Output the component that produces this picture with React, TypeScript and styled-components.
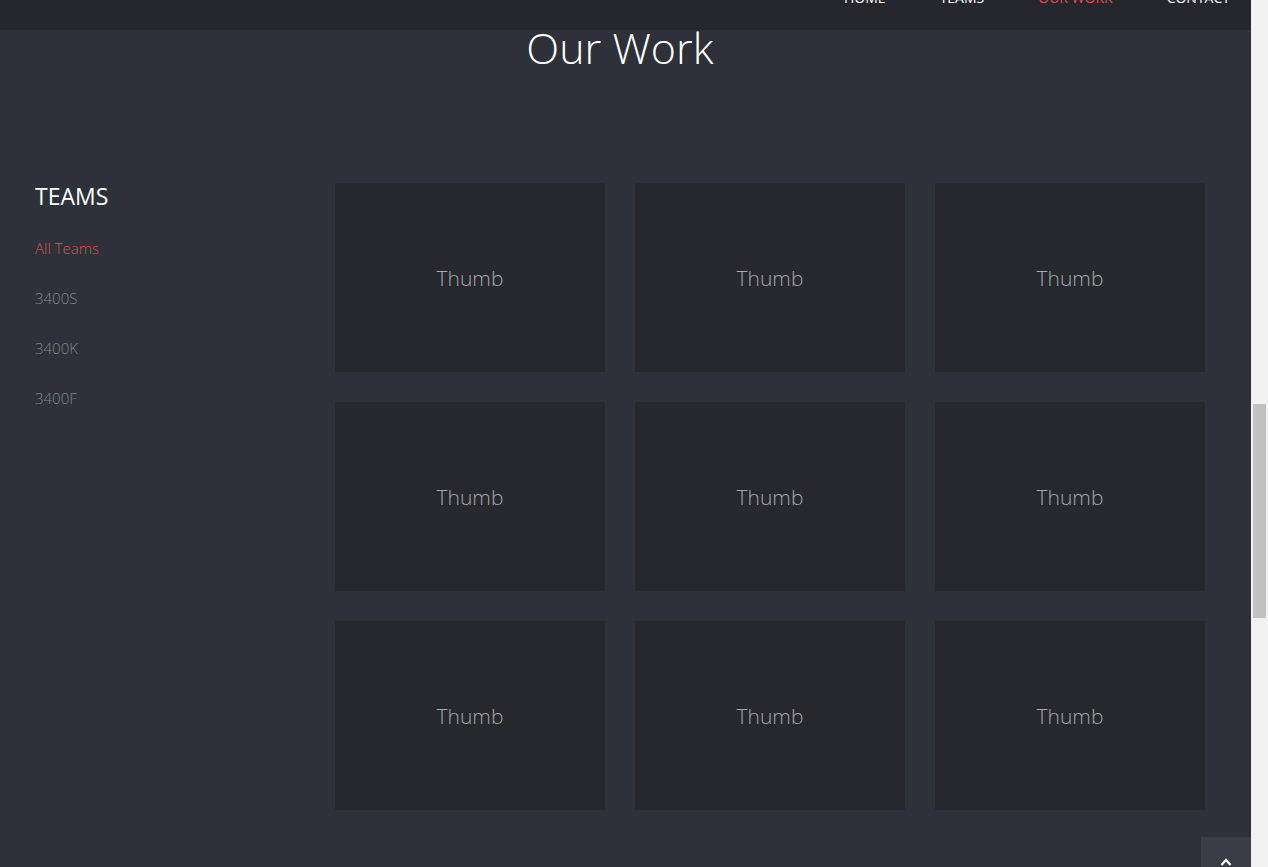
import React from 'react';
import styled, { createGlobalStyle } from 'styled-components';

const GlobalStyle = createGlobalStyle`
  html, body {
    margin: 0;
    padding: 0;
    height: 100%;
    overflow: hidden;
    background: #2e3139;
  }
  * {
    box-sizing: border-box;
  }
`;

const Shell = styled.div`
  display: flex;
  height: 867px;
  font-family: 'Open Sans', 'Noto Sans', sans-serif;
`;

const Page = styled.div`
  position: relative;
  flex: 1;
  display: flex;
  flex-direction: column;
  background: #2e3139;
  overflow: hidden;
`;

const NavBar = styled.nav`
  height: 30px;
  flex-shrink: 0;
  background: #25272c;
  display: flex;
  justify-content: flex-end;
  align-items: flex-start;
  padding-right: 21px;
  overflow: hidden;
`;

const NavLinks = styled.ul`
  display: flex;
  gap: 54px;
  list-style: none;
  margin: -12px 0 0;
  padding: 0;
`;

const NavLink = styled.li<{ active?: boolean }>`
  font-size: 14px;
  line-height: 20px;
  font-weight: 400;
  text-transform: uppercase;
  color: ${(p) => (p.active ? '#d9534f' : '#ffffff')};
`;

const Title = styled.h1`
  margin: -12px 0 0;
  padding-left: 35px;
  width: 1205px;
  text-align: center;
  font-size: 43px;
  line-height: 60px;
  font-weight: 300;
  color: #ffffff;
`;

const Body = styled.div`
  display: flex;
  padding: 105px 0 0 35px;
`;

const Sidebar = styled.aside`
  width: 300px;
  flex-shrink: 0;
`;

const SideTitle = styled.h3`
  margin: 0;
  font-size: 23px;
  line-height: 26px;
  font-weight: 400;
  color: #ffffff;
  text-transform: uppercase;
`;

const FilterList = styled.ul`
  list-style: none;
  margin: 29px 0 0;
  padding: 0;
  display: flex;
  flex-direction: column;
  gap: 30px;
`;

const Filter = styled.li<{ active?: boolean }>`
  font-size: 15px;
  line-height: 20px;
  font-weight: 300;
  color: ${(p) => (p.active ? '#d9534f' : '#84878c')};
`;

const Grid = styled.div`
  display: grid;
  grid-template-columns: repeat(3, 270px);
  grid-auto-rows: 189px;
  gap: 30px;
`;

const Thumb = styled.div`
  background: #26282d;
  display: flex;
  align-items: center;
  justify-content: center;
  font-size: 21px;
  font-weight: 300;
  color: #a6a7aa;
`;

const BackToTop = styled.button`
  position: absolute;
  right: 0;
  bottom: 0;
  width: 50px;
  height: 30px;
  border: none;
  padding: 21px 0 0;
  background: #3b3e46;
  display: flex;
  justify-content: center;
  align-items: flex-start;
  cursor: pointer;
`;

const ScrollTrack = styled.div`
  width: 17px;
  flex-shrink: 0;
  background: #f1f1f1;
  padding: 404px 2px 0;
`;

const ScrollThumb = styled.div`
  height: 214px;
  background: #c1c1c1;
`;

const filters = ['All Teams', '3400S', '3400K', '3400F'];

const App: React.FC = () => {
  return (
    <>
      <GlobalStyle />
      <Shell>
        <Page>
          <NavBar>
            <NavLinks>
              <NavLink>Home</NavLink>
              <NavLink>Teams</NavLink>
              <NavLink active>Our Work</NavLink>
              <NavLink>Contact</NavLink>
            </NavLinks>
          </NavBar>
          <Title>Our Work</Title>
          <Body>
            <Sidebar>
              <SideTitle>Teams</SideTitle>
              <FilterList>
                {filters.map((f, i) => (
                  <Filter key={f} active={i === 0}>
                    {f}
                  </Filter>
                ))}
              </FilterList>
            </Sidebar>
            <Grid>
              {Array.from({ length: 9 }).map((_, i) => (
                <Thumb key={i}>Thumb</Thumb>
              ))}
            </Grid>
          </Body>
          <BackToTop aria-label="Back to top">
            <svg width="12" height="8" viewBox="0 0 12 8">
              <polyline points="1.5,7 6,2 10.5,7" fill="none" stroke="#ffffff" strokeWidth="2.2" />
            </svg>
          </BackToTop>
        </Page>
        <ScrollTrack>
          <ScrollThumb />
        </ScrollTrack>
      </Shell>
    </>
  );
};

export default App;
